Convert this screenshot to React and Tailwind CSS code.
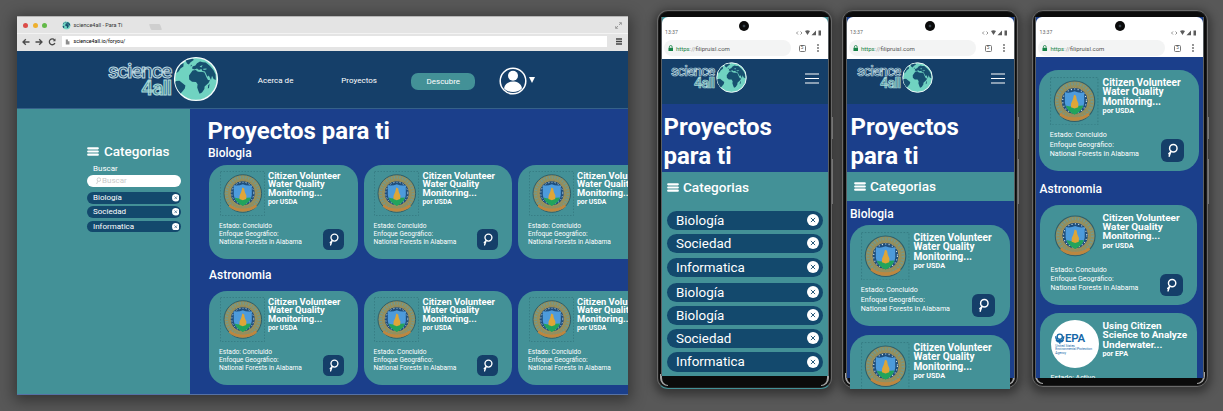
import React from "react";

function Globe({ className }) {
  return (
    <svg viewBox="0 0 48 48" className={className}>
      <circle cx="24" cy="24" r="21.4" fill="#70d3c1" stroke="#f4fbfb" strokeWidth="1.4" />
      <g fill="#17506f">
        <path d="M20.6 15.6L23.5 14.9L26 16.4L29 16.6L32.4 17.4L34.6 22.6L36 25L38 25.2L36.5 28L32.6 31.4L32.4 34L30 37.6L27.6 38.8L26.4 36L25.2 32.4L25.6 29.2L24 27L20 26.8L17.2 24.4L17 20.6Z" />
        <path d="M20 13.6L20.6 11.6L23.4 10.6L25 8.2L28 6.4L31 7.2L33.8 7.4L38 11L41.4 15L43.6 19.6L43.8 25L41.6 24L40 20.8L39 25L36.8 20.6L35.4 21.8L33 16.6L30.4 16L29.4 14L27 15L25 13.4L22.4 14.4Z" />
        <path d="M3.2 26.8L4.4 26L7.4 25.8L10 27.8L13.4 30.4L12.8 33.4L10.4 36.4L8.6 38.4C5.400 35.200 3.600 31 3.200 26.800Z" />
        <path d="M13.6 5.6L20.4 3.8L22 4.8L18.6 7.2L16.8 9.6L15 8.4ZM5.8 13.8L8.6 9.8L11.6 8L11.4 11.4L8.4 13.4L6.8 16.2L4.4 18.2ZM20 10.8L18.6 11.6L19 9.4Z" />
        <path d="M36.2 30.4L37.6 28.8L37 33L35.8 33.6Z" />
      </g>
      <path d="M27.6 11.4L30.6 10L29.4 12.4ZM31.2 13.8L34.6 13.4L34.4 14.6L31.6 14.9ZM24.4 16L28.4 15.6L31 16.8L28 16.8Z" fill="#70d3c1" />
    </svg>
  );
}

function Logo({ className }) {
  return (
    <div className={`flex items-center font-['Roboto',sans-serif] ${className}`}>
      <div className="mt-[0.1em] flex flex-col items-end">
        <span className="block text-[2.1em] font-medium leading-[0.81] tracking-[-0.063em] text-[#1c4a72] [-webkit-text-stroke:0.05em_#b9d5df]">science</span>
        <span className="block text-[2.1em] font-medium leading-[0.81] tracking-[-0.05em] text-[#3d8792] [-webkit-text-stroke:0.05em_#a9d6d8]">4all</span>
      </div>
      <Globe className="ml-[0.08em] h-[4.8em] w-[4.8em]" />
    </div>
  );
}

function Seal({ framed }) {
  return (
    <svg viewBox="0 0 45 45" className="h-[4.5em] w-[4.5em] shrink-0">
      {framed && <rect x="0.5" y="0.5" width="44" height="44" fill="none" stroke="#2f7279" strokeWidth="0.6" strokeDasharray="1.5 1.5" />}
      <circle cx="22.8" cy="22.5" r="18.8" fill="#938f5e" stroke="#2f5f6b" strokeWidth="1" />
      <circle cx="22.8" cy="22.5" r="16.2" fill="none" stroke="#6f9a90" strokeWidth="2.6" strokeDasharray="1.3 1.5" />
      <path d="M10 33.2C16 38.800 29.600 38.800 35.600 33.2L37 35.600C30 42.200 15.500 42.200 8.600 35.600Z" fill="#bd8740" />
      <circle cx="22.8" cy="22.2" r="12.6" fill="#1f4e7c" stroke="#b99d52" strokeWidth="0.8" />
      <circle cx="22.8" cy="22.2" r="11" fill="none" stroke="#d5e6ea" strokeWidth="1" strokeDasharray="1 2.2" />
      <path d="M13.800 14.200Q18.500 15.200 22.800 13.200Q27 15.200 31.800 14.200V24Q31.500 30.500 22.800 34Q14.200 30.500 13.800 24Z" fill="#4d9bdc" />
      <path d="M14.600 26.500Q18.600 27.800 22.800 27.200T31 26.500Q29.500 32 22.800 35Q16.300 32 14.600 26.500Z" fill="#22a35c" />
      <path d="M22.300 16.500L24.200 17.500L24.800 21L26.400 24.500L26.200 28L22.800 29.200L19.400 28L19.600 24.500L21.200 21Z" fill="#dea638" />
    </svg>
  );
}

function Epa() {
  return (
    <div className="flex h-[4.5em] w-[4.5em] shrink-0 flex-col justify-center rounded-full bg-white pl-[0.4em] text-[#1668a8]">
      <div className="flex items-center">
        <svg viewBox="0 0 10 12" className="h-[1.05em] w-[0.9em]" fill="none" stroke="#1668a8" strokeWidth="1.5">
          <circle cx="5" cy="4" r="2.800" />
          <path d="M0.600 3.500C0.800 7 3 8.500 5 8.500S9.200 7 9.400 3.500M1 7.500C2.500 10.800 7.500 10.800 9 7.500M5 7V11.500" />
        </svg>
        <span className="text-[1.08em] font-semibold leading-[0.9] tracking-[-0.01em]">EPA</span>
      </div>
      <span className="mt-[0.3em] block whitespace-nowrap text-[0.31em] leading-[1.1]">
        United States<br />Environmental Protection<br />Agency
      </span>
    </div>
  );
}

function Magnifier() {
  return (
    <svg viewBox="0 0 20 20" className="h-full w-full" fill="none" stroke="#fff" strokeWidth="1.3" strokeLinecap="round">
      <circle cx="10.900" cy="8.200" r="3.300" />
      <path d="M8.800 10.800L7.200 15.200M8.600 11.200L6.900 13" />
    </svg>
  );
}

function Card({ className, title = ["Citizen Volunteer", "Water Quality", "Monitoring..."], by = "USDA", estado = "Concluido", framed = true }) {
  return (
    <article className={`h-[9.4em] w-[14.85em] shrink-0 overflow-hidden rounded-[1.8em] bg-[#439197] text-white ${className}`}>
      <div className="flex pl-[1.05em] pt-[0.65em]">
        {by === "EPA" ? <Epa /> : <Seal framed={framed} />}
        <div className="ml-[0.35em] mt-[0.07em] whitespace-nowrap">
          <h3 className="text-[0.94em] font-bold leading-[0.93]">
            {title.map((line) => (
              <span key={line} className="block">{line}</span>
            ))}
          </h3>
          <p className="mt-[0.15em] text-[0.68em] font-bold leading-[1.1]">por {by}</p>
        </div>
      </div>
      <div className="flex justify-between pl-[1em] pr-[1.4em]">
        <div className="mt-[0.55em] whitespace-nowrap">
          <p className="text-[0.66em] leading-[1.212]">Estado: {estado}</p>
          <p className="mt-[0.15em] text-[0.66em] leading-[1.212]">
            Enfoque Geográfico:<br />National Forests in Alabama
          </p>
        </div>
        <button className="-ml-[4em] mt-[1.3em] h-[2.1em] w-[2.1em] shrink-0 rounded-[0.55em] bg-[#153f69]">
          <Magnifier />
        </button>
      </div>
    </article>
  );
}

function Bars({ className }) {
  return (
    <svg viewBox="0 0 12 9" className={className} stroke="#fff" strokeWidth="2.2" strokeLinecap="round">
      <path d="M1.200 1.300H10.800M1.200 4.500H10.800M1.200 7.700H10.800" />
    </svg>
  );
}

function Close({ className }) {
  return (
    <svg viewBox="0 0 12 12" className={className}>
      <circle cx="6" cy="6" r="6" fill="#fff" />
      <path d="M3.900 3.900L8.100 8.100M8.100 3.900L3.900 8.100" stroke="#13496d" strokeWidth="0.900" />
    </svg>
  );
}

function SmallPill({ label, className }) {
  return (
    <div className={`flex h-[11.5px] items-center justify-between rounded-full bg-[#13496d] pl-[6px] pr-[2px] text-[8px] leading-[11px] text-white ${className}`}>
      {label}
      <Close className="h-[7.5px] w-[7.5px]" />
    </div>
  );
}

function Browser() {
  return (
    <section className="mt-4 flex h-[379px] w-[611.500px] shrink-0 flex-col overflow-hidden bg-[#e4e4e4] shadow-[0_3px_14px_3px_rgba(0,0,0,0.4)]">
      <div className="flex h-[17px] items-center border-t border-[#b5b5b5] pl-[6.500px] pr-[6px] pt-px">
        <div className="flex gap-[4.500px]">
          <i className="h-[5px] w-[5px] rounded-full bg-[#dc4c48]" />
          <i className="h-[5px] w-[5px] rounded-full bg-[#eeb02e]" />
          <i className="h-[5px] w-[5px] rounded-full bg-[#62b947]" />
        </div>
        <Globe className="ml-[14.500px] h-[9px] w-[9px]" />
        <span className="ml-[3px] w-[76px] whitespace-nowrap text-[5.500px] text-[#333]">science4all - Para Ti</span>
        <i className="mt-[3px] h-[6px] w-[11px] skew-x-[20deg] rounded-[1px] bg-[#cfcfcf]" />
        <svg viewBox="0 0 8 8" className="ml-auto h-[7px] w-[7px]" fill="#8a8a8a" stroke="#8a8a8a">
          <path d="M4.800 0.500H7.500V3.200ZM0.500 4.800V7.500H3.200Z" strokeWidth="0.4" />
          <path d="M4.600 3.400L6 2M2 6L3.400 4.600" />
        </svg>
      </div>
      <div className="flex h-[18px] items-center border-t border-[#f3f3f3] pb-[2px] pl-[5px] pr-[6.500px]">
        <svg viewBox="0 0 36 10" className="h-[10px] w-9" fill="none" stroke="#4a4a4a" strokeWidth="1.300">
          <path d="M7.500 5H1M3.800 2.200L1 5L3.800 7.800M13.500 5H20M17.200 2.200L20 5L17.200 7.800M32.500 3A2.900 2.900 0 1 0 32.900 6" />
          <path d="M33.500 1.500V4.200H30.800Z" fill="#4a4a4a" stroke="none" />
        </svg>
        <div className="ml-[4px] flex h-[11px] flex-1 items-center bg-white pl-[3px]">
          <svg viewBox="0 0 5 7" className="h-[6px] w-[5px]" fill="#8d8d8d"><path d="M0.500 0.500H3V2.500H4.800V6.500H0.500Z" /></svg>
          <span className="ml-[4px] text-[5.300px] leading-none text-black">science4all.io/foryou/</span>
        </div>
        <svg viewBox="0 0 6 7" className="ml-[9px] h-[7px] w-[6px]" stroke="#444" strokeWidth="1.400"><path d="M0 1H6M0 3.500H6M0 6H6" /></svg>
      </div>
      <header className="flex h-[57.500px] items-center border-b border-[#35618a] bg-[#153f69] pl-[91.500px] text-[8px] text-white">
        <Logo className="text-[10px]" />
        <nav className="-mt-px ml-[38px] flex flex-1 items-center pt-[5px]">
          <a className="w-[83.500px]">Acerca de</a>
          <a className="w-[70px]">Proyectos</a>
          <a className="h-[17px] w-[64px] rounded-[7px] bg-[#439197] text-center leading-[17px]">Descubre</a>
          <svg viewBox="0 0 28 28" className="ml-[24px] h-[28px] w-[28px]">
            <circle cx="14" cy="14" r="12.800" fill="none" stroke="#fff" strokeWidth="1.500" />
            <circle cx="14" cy="8.700" r="5" fill="#fff" />
            <path d="M5 21.200C6 16.500 10 14.600 14 14.600S22 16.500 23 21.200C19 26.300 9 26.300 5 21.200Z" fill="#fff" />
          </svg>
          <svg viewBox="0 0 6 6" className="-mt-[3px] ml-[2px] h-[6px] w-[6px]"><path d="M0 0H6L3 6Z" fill="#fff" /></svg>
        </nav>
      </header>
      <div className="flex min-h-0 flex-1 border-b border-[#5671a5]">
        <aside className="w-[173px] shrink-0 bg-[#439197] pl-[70.500px] pr-[8.500px] pt-[34.500px] text-white">
          <h2 className="flex items-center text-[13.500px] font-medium leading-4">
            <Bars className="mr-[5px] h-[9px] w-[12px]" />Categorias
          </h2>
          <label className="mt-[5px] block pl-[6px] text-[8px] leading-[10px]">Buscar</label>
          <div className="mt-px flex h-[11.500px] items-center rounded-full bg-white pl-[9px] text-[8px] text-[#c9c9c9]">
            <svg viewBox="0 0 5 8" className="mr-px h-[8px] w-[5px]" fill="none" stroke="#c4c4c4" strokeWidth="0.800">
              <circle cx="2.900" cy="2.600" r="1.800" /><path d="M1.800 4.200L0.600 7" />
            </svg>
            Buscar
          </div>
          <SmallPill label="Biología" className="mt-[5.500px]" />
          <SmallPill label="Sociedad" className="mt-[2.500px]" />
          <SmallPill label="Informatica" className="mt-[3px]" />
        </aside>
        <main className="min-w-0 flex-1 overflow-hidden bg-[#1b3f8b] pl-[19.500px] text-white">
          <h1 className="-ml-[1.500px] mt-[8px] text-[24px] font-bold leading-[28px]">Proyectos para ti</h1>
          <h2 className="-ml-px text-[12px] font-medium leading-[16px]">Biologia</h2>
          <div className="mt-[4px] flex gap-[6px] text-[10px]"><Card /><Card /><Card /></div>
          <h2 className="mt-[8px] text-[12px] font-medium leading-[16px]">Astronomia</h2>
          <div className="mt-[8px] flex gap-[6px] text-[10px]"><Card /><Card /><Card /></div>
        </main>
      </div>
    </section>
  );
}

function StatusBar({ className }) {
  return (
    <div className={`shrink-0 rounded-t-[6px] bg-white pt-[11px] ${className}`}>
      <div className="flex h-[9px] items-center justify-between pl-[3.500px] pr-[6px] text-[5.200px] text-[#666]">
        13:37
        <svg viewBox="0 0 26 6" className="h-[6px] w-[26px]" fill="#5b5b5b">
          <path d="M2 1.500L0.500 3L2 4.500M4.500 1.500L6 3L4.500 4.500" fill="none" stroke="#777" strokeWidth="0.800" />
          <path d="M9 1Q11.500 -0.300 14 1L11.500 5ZM20 0.500V5.300H15.500ZM22.500 0.500H25V5.500H22.500Z" />
        </svg>
      </div>
      <div className="mt-[3px] flex items-center pl-[2px] pr-[9px]">
        <div className="flex h-[16px] w-[127px] items-center rounded-full bg-[#f3f4f4] pl-[4px] text-[6px] text-[#555]">
          <svg viewBox="0 0 6 7" className="mr-[3px] h-[6.500px] w-[5.500px]"><path d="M0.500 3H5.500V6.800H0.500Z" fill="#168347" /><path d="M1.500 3V2A1.500 1.500 0 0 1 4.500 2V3" fill="none" stroke="#168347" strokeWidth="0.900" /></svg>
          <span className="text-[#168347]">https</span><span className="text-[#999]">://</span>filipruisl.com
        </div>
        <div className="ml-auto mr-[11px] flex h-[7px] w-[7px] items-center justify-center rounded-[1.500px] border border-[#777] text-[4.500px] leading-none text-[#555]">5</div>
        <svg viewBox="0 0 2 8" className="h-[8px] w-[2px]" fill="#666"><circle cx="1" cy="1" r="0.900" /><circle cx="1" cy="4" r="0.900" /><circle cx="1" cy="7" r="0.900" /></svg>
      </div>
    </div>
  );
}

function Phone({ className, screenClass, children, barClass = "h-[42px]" }) {
  return (
    <section className={`relative mt-[10px] shrink-0 rounded-[11px] border border-[#6a6a6a] bg-[#0b0b0b] pt-[6px] shadow-[0_3px_10px_3px_rgba(0,0,0,0.4)] ring-1 ring-inset ring-[#1d1d1d] ${className}`}>
      <i className="absolute bottom-[2px] left-[2px] h-[12px] w-[8px] rounded-bl-[8px] border-b border-l-2 border-[#a5a5a5]" />
      <i className="absolute bottom-[2px] right-[2px] h-[12px] w-[8px] rounded-br-[8px] border-b border-r-2 border-[#a5a5a5]" />
      <div className={`relative flex flex-col border-x border-[#5a5f63] text-white ${screenClass}`}>
        <StatusBar className={barClass} />
        {children}
      </div>
      <i className="absolute left-1/2 top-[9.500px] h-[10px] w-[10px] -translate-x-1/2 rounded-full bg-[radial-gradient(circle,#39444d_0_12%,#0a0a0a_25%)]" />
      <i className="absolute -right-[2px] top-[106px] h-[22px] w-px bg-[#777]" />
      <i className="absolute -right-[2px] top-[148px] h-[45px] w-px bg-[#777]" />
    </section>
  );
}

function PhoneTop({ logoClass, titleClass }) {
  return (
    <>
      <header className={`flex h-[45px] shrink-0 items-start justify-between bg-[#153f69] pr-[9px] pt-[2px] ${logoClass}`}>
        <Logo className="text-[6.900px]" />
        <svg viewBox="0 0 14 11" className="mt-[12px] h-[11px] w-[14px]" stroke="#fff" strokeWidth="1.100"><path d="M0 1H14M0 5.500H14M0 10H14" /></svg>
      </header>
      <h1 className={`h-[68px] shrink-0 bg-[#1b3f8b] pt-[8.500px] text-[24px] font-bold leading-[29px] ${titleClass}`}>Proyectos<br />para ti</h1>
    </>
  );
}

function MobileCategories({ className }) {
  return (
    <h2 className={`flex shrink-0 items-center bg-[#439197] text-[13.600px] font-medium ${className}`}>
      <Bars className="mr-[4px] h-[9px] w-[12px]" />Categorias
    </h2>
  );
}

function Pill({ label, className = "mt-[4px]" }) {
  return (
    <div className={`flex h-[19.500px] items-center justify-between rounded-full bg-[#13496d] pl-[9px] pr-[4px] text-[13.400px] leading-[19px] ${className}`}>
      {label}
      <Close className="h-[12px] w-[12px]" />
    </div>
  );
}

export default function App() {
  return (
    <div className="flex h-[411px] w-[1223px] overflow-hidden bg-[#585858] pl-[16.500px] font-['Roboto',sans-serif]">
      <Browser />
      <Phone className="ml-[28.500px] h-[379px] w-[175.500px] border-b-[#439197]" screenClass="ml-[3px] w-[168px] h-[359px] bg-[#439197]">
        <PhoneTop logoClass="pl-[9.500px]" titleClass="pl-[2px]" />
        <MobileCategories className="h-[31px] pl-[5.500px]" />
        <div className="pl-[5.500px] pr-[4.500px]">
          <Pill label="Biología" className="mt-[7.500px]" />
          <Pill label="Sociedad" className="mt-[3.500px]" />
          <Pill label="Informatica" className="mt-[4.500px]" />
          <Pill label="Biología" className="mt-[5.500px]" />
          <Pill label="Biología" className="mt-[3.500px]" />
          <Pill label="Sociedad" className="mt-[3.500px]" />
          <Pill label="Informatica" className="mt-[4px]" />
        </div>
      </Phone>
      <Phone className="ml-[10px] h-[378px] w-[175.500px]" screenClass="ml-[2.500px] w-[169px] h-[361px] bg-[#1b3f8b]">
        <PhoneTop logoClass="pl-[10.500px]" titleClass="pl-[4px]" />
        <MobileCategories className="h-[29px] pb-px pl-[7.500px]" />
        <h2 className="mt-[5px] pl-[3.500px] text-[12px] font-medium leading-[16px]">Biologia</h2>
        <div className="mt-[3px] flex flex-col gap-[9px] pl-[3.500px] text-[10.770px]">
          <Card />
          <div className="h-[54px] overflow-hidden"><Card /></div>
        </div>
      </Phone>
      <Phone className="ml-[14px] h-[377px] w-[176px]" screenClass="ml-[2.500px] w-[169px] h-[361px] bg-[#1b3f8b] overflow-hidden" barClass="h-[40px]">
        <Card className="ml-[3px] mt-[13px] text-[10.770px]" />
        <h2 className="mt-[10px] pl-[3.500px] text-[12px] font-medium leading-[16px]">Astronomia</h2>
        <Card className="ml-[4px] mt-[8px] text-[10.600px]" framed={false} />
        <Card className="ml-[4px] mt-[8.500px] text-[10.600px]" title={["Using Citizen", "Science to Analyze", "Underwater..."]} by="EPA" estado="Activo" />
      </Phone>
    </div>
  );
}
